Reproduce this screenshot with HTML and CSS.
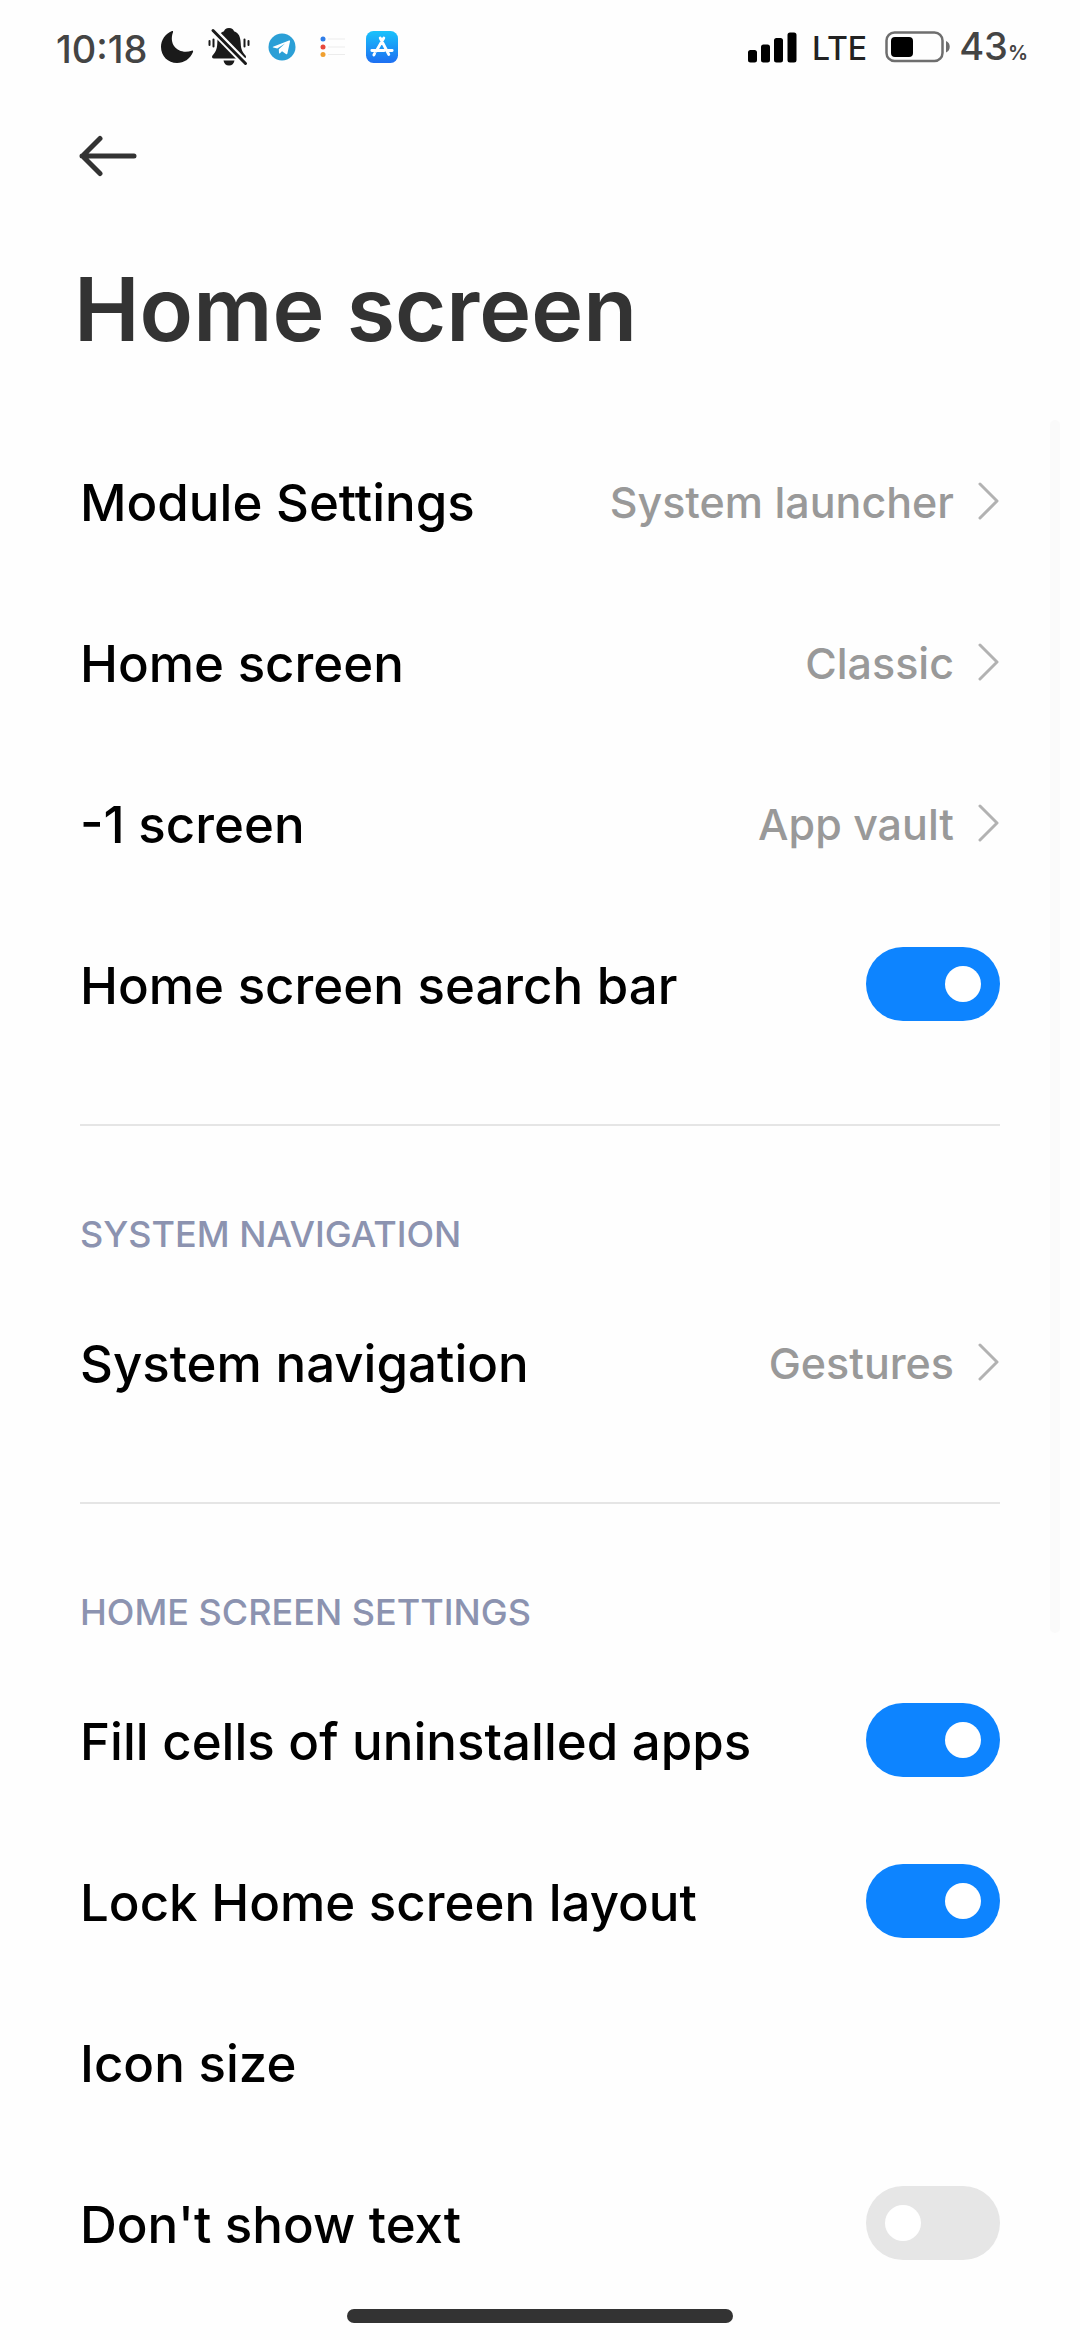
FILE: index.html
```html
<!DOCTYPE html>
<html lang="en">
<head>
<meta charset="utf-8">
<meta name="viewport" content="width=device-width">
<title>Home screen</title>
<link rel="stylesheet" href="styles.css">
</head>
<body>
<svg class="defs" aria-hidden="true">
  <symbol id="chevron" viewBox="0 0 22 38"><path d="M2 2 19 19 2 36" fill="none" stroke="#b2b2b2" stroke-width="3" stroke-linecap="round" stroke-linejoin="round"/></symbol>
</svg>

<div class="status-bar">
  <div class="status-left">
    <span class="clock">10:18</span>
    <svg class="moon" width="34" height="34" viewBox="0 0 34 34"><path d="M12 1C5 4 1 10 1 17c0 9 7 16 16 16 7 0 13-4 16-11 .4-1-.3-1.700-1.300-1.300C20 25 8 16 13 2.300 13.300 1.300 13 .6 12 1Z" fill="#1a1a1a"/></svg>
    <svg class="bell" width="42" height="38" viewBox="0 0 42 38">
      <path d="M21 0c-3 0-4.500 1.500-5 3.200C11 5 9.500 9 9.300 15 9 22 7.500 24 4.500 27.500 3.500 29 4 30.500 6 30.500h30c2 0 2.500-1.500 1.500-3C34.500 24 33 22 32.700 15 32.500 9 31 5 26 3.200 25.500 1.500 24 0 21 0ZM15.500 32.500h11c-.5 3-2.500 5-5.500 5s-5-2-5.500-5Z" fill="#1a1a1a"/>
      <path d="M4 1 38 36" stroke="#fefefe" stroke-width="7"/>
      <path d="M5 2.500 37.500 35.500" stroke="#1a1a1a" stroke-width="3" stroke-linecap="round"/>
      <path d="M5.500 11.500v7M1.500 13v4M36.500 11.500v7M40.500 13v4" stroke="#1a1a1a" stroke-width="2" stroke-linecap="round"/>
    </svg>
    <svg class="telegram" width="28" height="28" viewBox="0 0 28 28"><circle cx="14" cy="14" r="13.500" fill="#2b9fd6"/><path d="M5 13.800 21 7.600c.8-.3 1.200.1 1 1l-2.600 12c-.2.800-.8 1-1.500.5L14 18.200l-2 2c-.5.500-1 .4-1-.4l-.2-3.600L17 10.600l-7.700 4.800L5.200 14.500c-.6-.2-.6-.5-.2-.7Z" fill="#fff"/></svg>
    <svg class="reminders" width="26" height="26" viewBox="0 0 26 26">
      <path d="M8 5h17M8 13h17M8 20.500h17" stroke="#ececec" stroke-width="1"/>
      <circle cx="3" cy="5" r="2.500" fill="#2f7de8"/><circle cx="3" cy="13" r="2.500" fill="#e8483c"/><circle cx="3" cy="20.500" r="2.500" fill="#f0a030"/>
    </svg>
    <svg class="appstore" width="32" height="32" viewBox="0 0 32 32">
      <defs><linearGradient id="store" x2="0" y2="1"><stop stop-color="#19c2fb"/><stop offset="1" stop-color="#1e6ff2"/></linearGradient></defs>
      <rect width="32" height="32" rx="7.500" fill="url(#store)"/>
      <path d="M14.200 7 22.800 23.500M17.800 7 10.300 20M5.800 19.500h12.500M22 19.500h4.200M8.600 22.500 7.800 24" fill="none" stroke="#fff" stroke-width="2.800" stroke-linecap="round"/>
    </svg>
  </div>
  <div class="status-right">
    <svg width="50" height="32" viewBox="0 0 50 32"><path d="M2.500 21.500h4v7.500h-4zM15.500 16h4v13h-4zM28.500 9.500h4V29h-4zM42 4h4v25h-4z" stroke="#000" stroke-width="5" stroke-linejoin="round"/></svg>
    <span class="network">LTE</span>
    <svg class="battery" width="66" height="32" viewBox="0 0 66 32"><rect x="1.500" y="1.500" width="56" height="28.500" rx="8" fill="none" stroke="#6e6e6e" stroke-width="2.500"/><rect x="6" y="6" width="22" height="20" rx="4"/><path d="M61 10c5 2 5 9.500 0 11.500Z" fill="#6e6e6e"/></svg>
    <span class="charge">43<small>%</small></span>
  </div>
</div>

<header class="header">
  <button class="back" type="button" aria-label="Back">
    <svg width="64" height="42" viewBox="0 0 64 42"><path d="M60 21H8M26 3.500 8.500 21 26 38.500" fill="none" stroke="#333" stroke-width="5" stroke-linecap="round" stroke-linejoin="round"/></svg>
  </button>
  <h1>Home screen</h1>
</header>

<main class="settings">
  <section class="group">
    <a class="row" href="#module"><span class="name">Module Settings</span><span class="value">System launcher</span><svg class="chevron"><use href="#chevron"/></svg></a>
    <a class="row" href="#home"><span class="name">Home screen</span><span class="value">Classic</span><svg class="chevron"><use href="#chevron"/></svg></a>
    <a class="row" href="#minus-one"><span class="name">-1 screen</span><span class="value">App vault</span><svg class="chevron"><use href="#chevron"/></svg></a>
    <label class="row"><span class="name">Home screen search bar</span><input class="switch" type="checkbox" checked></label>
  </section>
  <section class="group">
    <h2>SYSTEM NAVIGATION</h2>
    <a class="row" href="#navigation"><span class="name">System navigation</span><span class="value">Gestures</span><svg class="chevron"><use href="#chevron"/></svg></a>
  </section>
  <section class="group">
    <h2>HOME SCREEN SETTINGS</h2>
    <label class="row"><span class="name">Fill cells of uninstalled apps</span><input class="switch" type="checkbox" checked></label>
    <label class="row"><span class="name">Lock Home screen layout</span><input class="switch" type="checkbox" checked></label>
    <a class="row" href="#icon-size"><span class="name">Icon size</span></a>
    <label class="row"><span class="name">Don't show text</span><input class="switch" type="checkbox"></label>
  </section>
  <div class="scroll-thumb"></div>
</main>
<div class="home-indicator"></div>
</body>
</html>
```
FILE: styles.css
```css
* {
  box-sizing: border-box;
}

body {
  margin: 0;
  padding-bottom: 17px;
  background: #fefefe;
  color: #000;
  font-family: Inter, "Liberation Sans", sans-serif;
  font-weight: 500;
}

svg {
  display: block;
  flex: none;
}

.defs {
  position: absolute;
  width: 0;
  height: 0;
}

.status-bar {
  display: flex;
  align-items: center;
  justify-content: space-between;
  height: 94px;
  padding: 0 52px 0 56px;
  color: #444;
  font-size: 38px;
  line-height: 44px;
}

.status-left,
.status-right {
  display: flex;
  align-items: center;
}

.clock,
.network,
.charge {
  padding-top: 4px;
}

.moon {
  margin-left: 12px;
}

.bell {
  margin-left: 14px;
}

.telegram {
  margin-left: 18px;
}

.reminders {
  margin-left: 24px;
}

.appstore {
  margin-left: 20px;
}

.network {
  margin-left: 14px;
  color: #222;
  font-size: 32px;
}

.battery {
  margin: 0 8px 0 18px;
}

.charge small {
  font-size: 20px;
  font-weight: 600;
}

.header {
  padding: 0 74px;
}

.back {
  display: flex;
  align-items: center;
  height: 124px;
  padding: 0;
  border: 0;
  background: none;
}

h1 {
  margin: 0;
  color: #333;
  font-size: 88px;
  font-weight: 600;
  line-height: 182px;
}

.settings {
  position: relative;
  margin-top: 20px;
}

.group {
  margin: 0 80px;
}

.group + .group {
  margin-top: 60px;
  border-top: 2px solid #e5e5e5;
}

h2 {
  margin: 0;
  padding: 86px 0 25px;
  color: #8c93b0;
  font-size: 36px;
  font-weight: 500;
  line-height: 44px;
}

.row {
  display: flex;
  align-items: center;
  justify-content: space-between;
  height: 161px;
  color: inherit;
  text-decoration: none;
}

.name {
  flex: 1;
  padding-top: 5px;
  font-size: 51px;
  line-height: 60px;
}

.value {
  padding-top: 3px;
  color: #999;
  font-size: 43px;
  line-height: 52px;
}

.chevron {
  width: 22px;
  height: 38px;
  margin-left: 24px;
}

.switch {
  flex: none;
  width: 134px;
  height: 74px;
  margin: 0;
  padding: 19px;
  border-radius: 37px;
  background: #e6e6e6;
  appearance: none;
}

.switch::before {
  content: "";
  display: block;
  width: 36px;
  height: 36px;
  border-radius: 50%;
  background: #fff;
}

.switch:checked {
  background: #0d84ff;
}

.switch:checked::before {
  margin-left: auto;
}

.scroll-thumb {
  position: absolute;
  top: 0;
  right: 20px;
  width: 10px;
  height: 64.4%;
  border-radius: 5px;
  background: #fafafa;
}

.home-indicator {
  width: 386px;
  height: 14px;
  margin: 6px auto 0;
  border-radius: 7px;
  background: #333;
}
```
